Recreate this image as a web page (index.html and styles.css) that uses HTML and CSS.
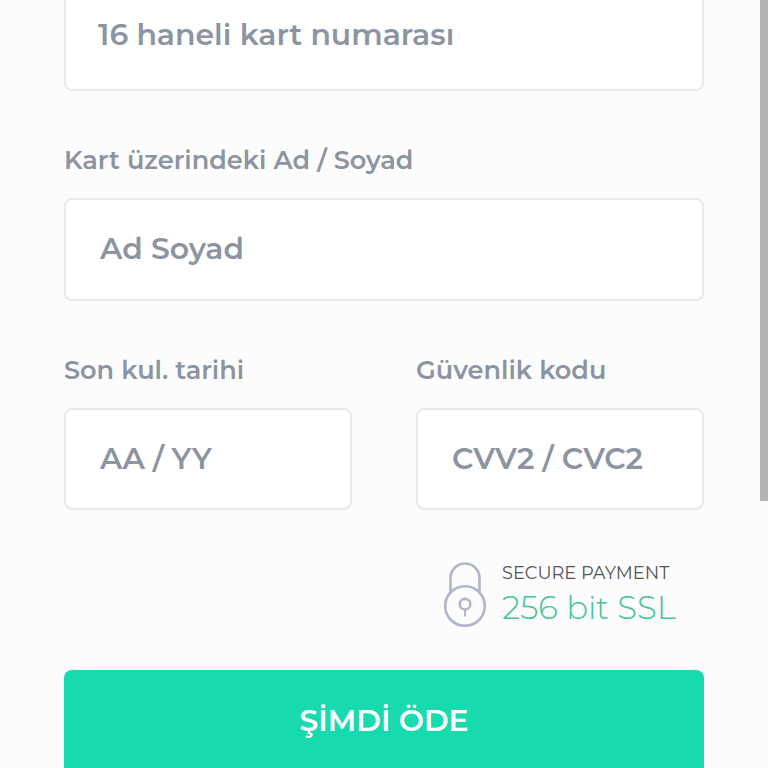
FILE: index.html
```html
<!DOCTYPE html>
<html lang="tr">
<head>
    <meta charset="UTF-8">
    <meta name="viewport" content="width=device-width, initial-scale=1.0">
    <title>Ödeme</title>
    <link rel="stylesheet" href="styles.css">
</head>
<body>
    <form class="payment-form">
        <input class="card-number" type="text" placeholder="16 haneli kart numarası">
        <div class="field">
            <label for="cardName">Kart üzerindeki Ad / Soyad</label>
            <input type="text" id="cardName" placeholder="Ad Soyad">
        </div>
        <div class="row">
            <div class="field">
                <label for="expiry">Son kul. tarihi</label>
                <input class="expiry" type="text" id="expiry" placeholder="AA / YY">
            </div>
            <div class="field">
                <label for="cvv">Güvenlik kodu</label>
                <input type="text" id="cvv" placeholder="CVV2 / CVC2">
            </div>
        </div>
        <div class="secure">
            <svg class="lock" width="44" height="66" viewBox="0 0 44 66" fill="none" stroke="#b0b6cb" stroke-width="2.6">
                <path d="M7.5 31V16a14.5 14.5 0 0 1 29 0v15"/>
                <circle cx="22" cy="44" r="19.8"/>
                <circle cx="22" cy="42.2" r="5.3"/>
                <path d="M22 47.5v7" stroke-width="2"/>
            </svg>
            <div class="secure-text">
                <span class="secure-title">SECURE PAYMENT</span>
                <span class="secure-ssl">256 bit SSL</span>
            </div>
        </div>
        <button type="button">ŞİMDİ ÖDE</button>
    </form>
    <div class="scrollbar"></div>
</body>
</html>
```

FILE: styles.css
```css
:root {
    --text-color: #8c94a1;
    --border-color: #e9e9ea;
    --bg-color: #fcfcfd;
    --primary-color: #17daae;
}
* {
    box-sizing: border-box;
}
body {
    margin: 0;
    height: 768px;
    overflow: hidden;
    background: var(--bg-color);
    color: var(--text-color);
    font-family: Montserrat, Inter, sans-serif;
    font-weight: 600;
}
.payment-form {
    width: 640px;
    margin: -20px auto 0;
}
input {
    display: block;
    width: 100%;
    height: 103px;
    padding: 0 34px 2px;
    border: 2px solid var(--border-color);
    border-radius: 8px;
    background: #fff;
    font: inherit;
    font-size: 29.9px;
    outline: none;
}
input::placeholder {
    color: var(--text-color);
    opacity: 1;
}
.card-number {
    height: 111px;
    padding: 0 32px 2px;
}
.expiry {
    letter-spacing: -0.3px;
}
.field {
    padding-top: 51px;
}
label {
    display: block;
    height: 36px;
    margin-bottom: 20px;
    line-height: 36px;
    font-size: 25.6px;
    white-space: nowrap;
}
.row {
    display: grid;
    grid-template-columns: 1fr 1fr;
    gap: 64px;
}
.row input {
    height: 102px;
}
.secure {
    display: flex;
    gap: 15px;
    height: 160px;
    padding: 52px 0 0 379px;
}
.secure-text {
    display: flex;
    flex-direction: column;
}
.secure-title {
    height: 23px;
    line-height: 22px;
    color: #555;
    font-size: 17.8px;
    font-weight: 400;
    white-space: nowrap;
}
.secure-ssl {
    height: 46px;
    line-height: 46px;
    color: #45c29c;
    font-size: 32.4px;
    font-weight: 300;
    white-space: nowrap;
}
button {
    display: block;
    width: 100%;
    height: 112px;
    padding: 0 0 11px;
    border: none;
    border-radius: 8px;
    background: var(--primary-color);
    color: #fff;
    font: inherit;
    font-size: 29.9px;
    cursor: pointer;
}
.scrollbar {
    position: absolute;
    top: 0;
    right: 0;
    width: 8px;
    height: 501px;
    background: #b4b4b4;
}
```
